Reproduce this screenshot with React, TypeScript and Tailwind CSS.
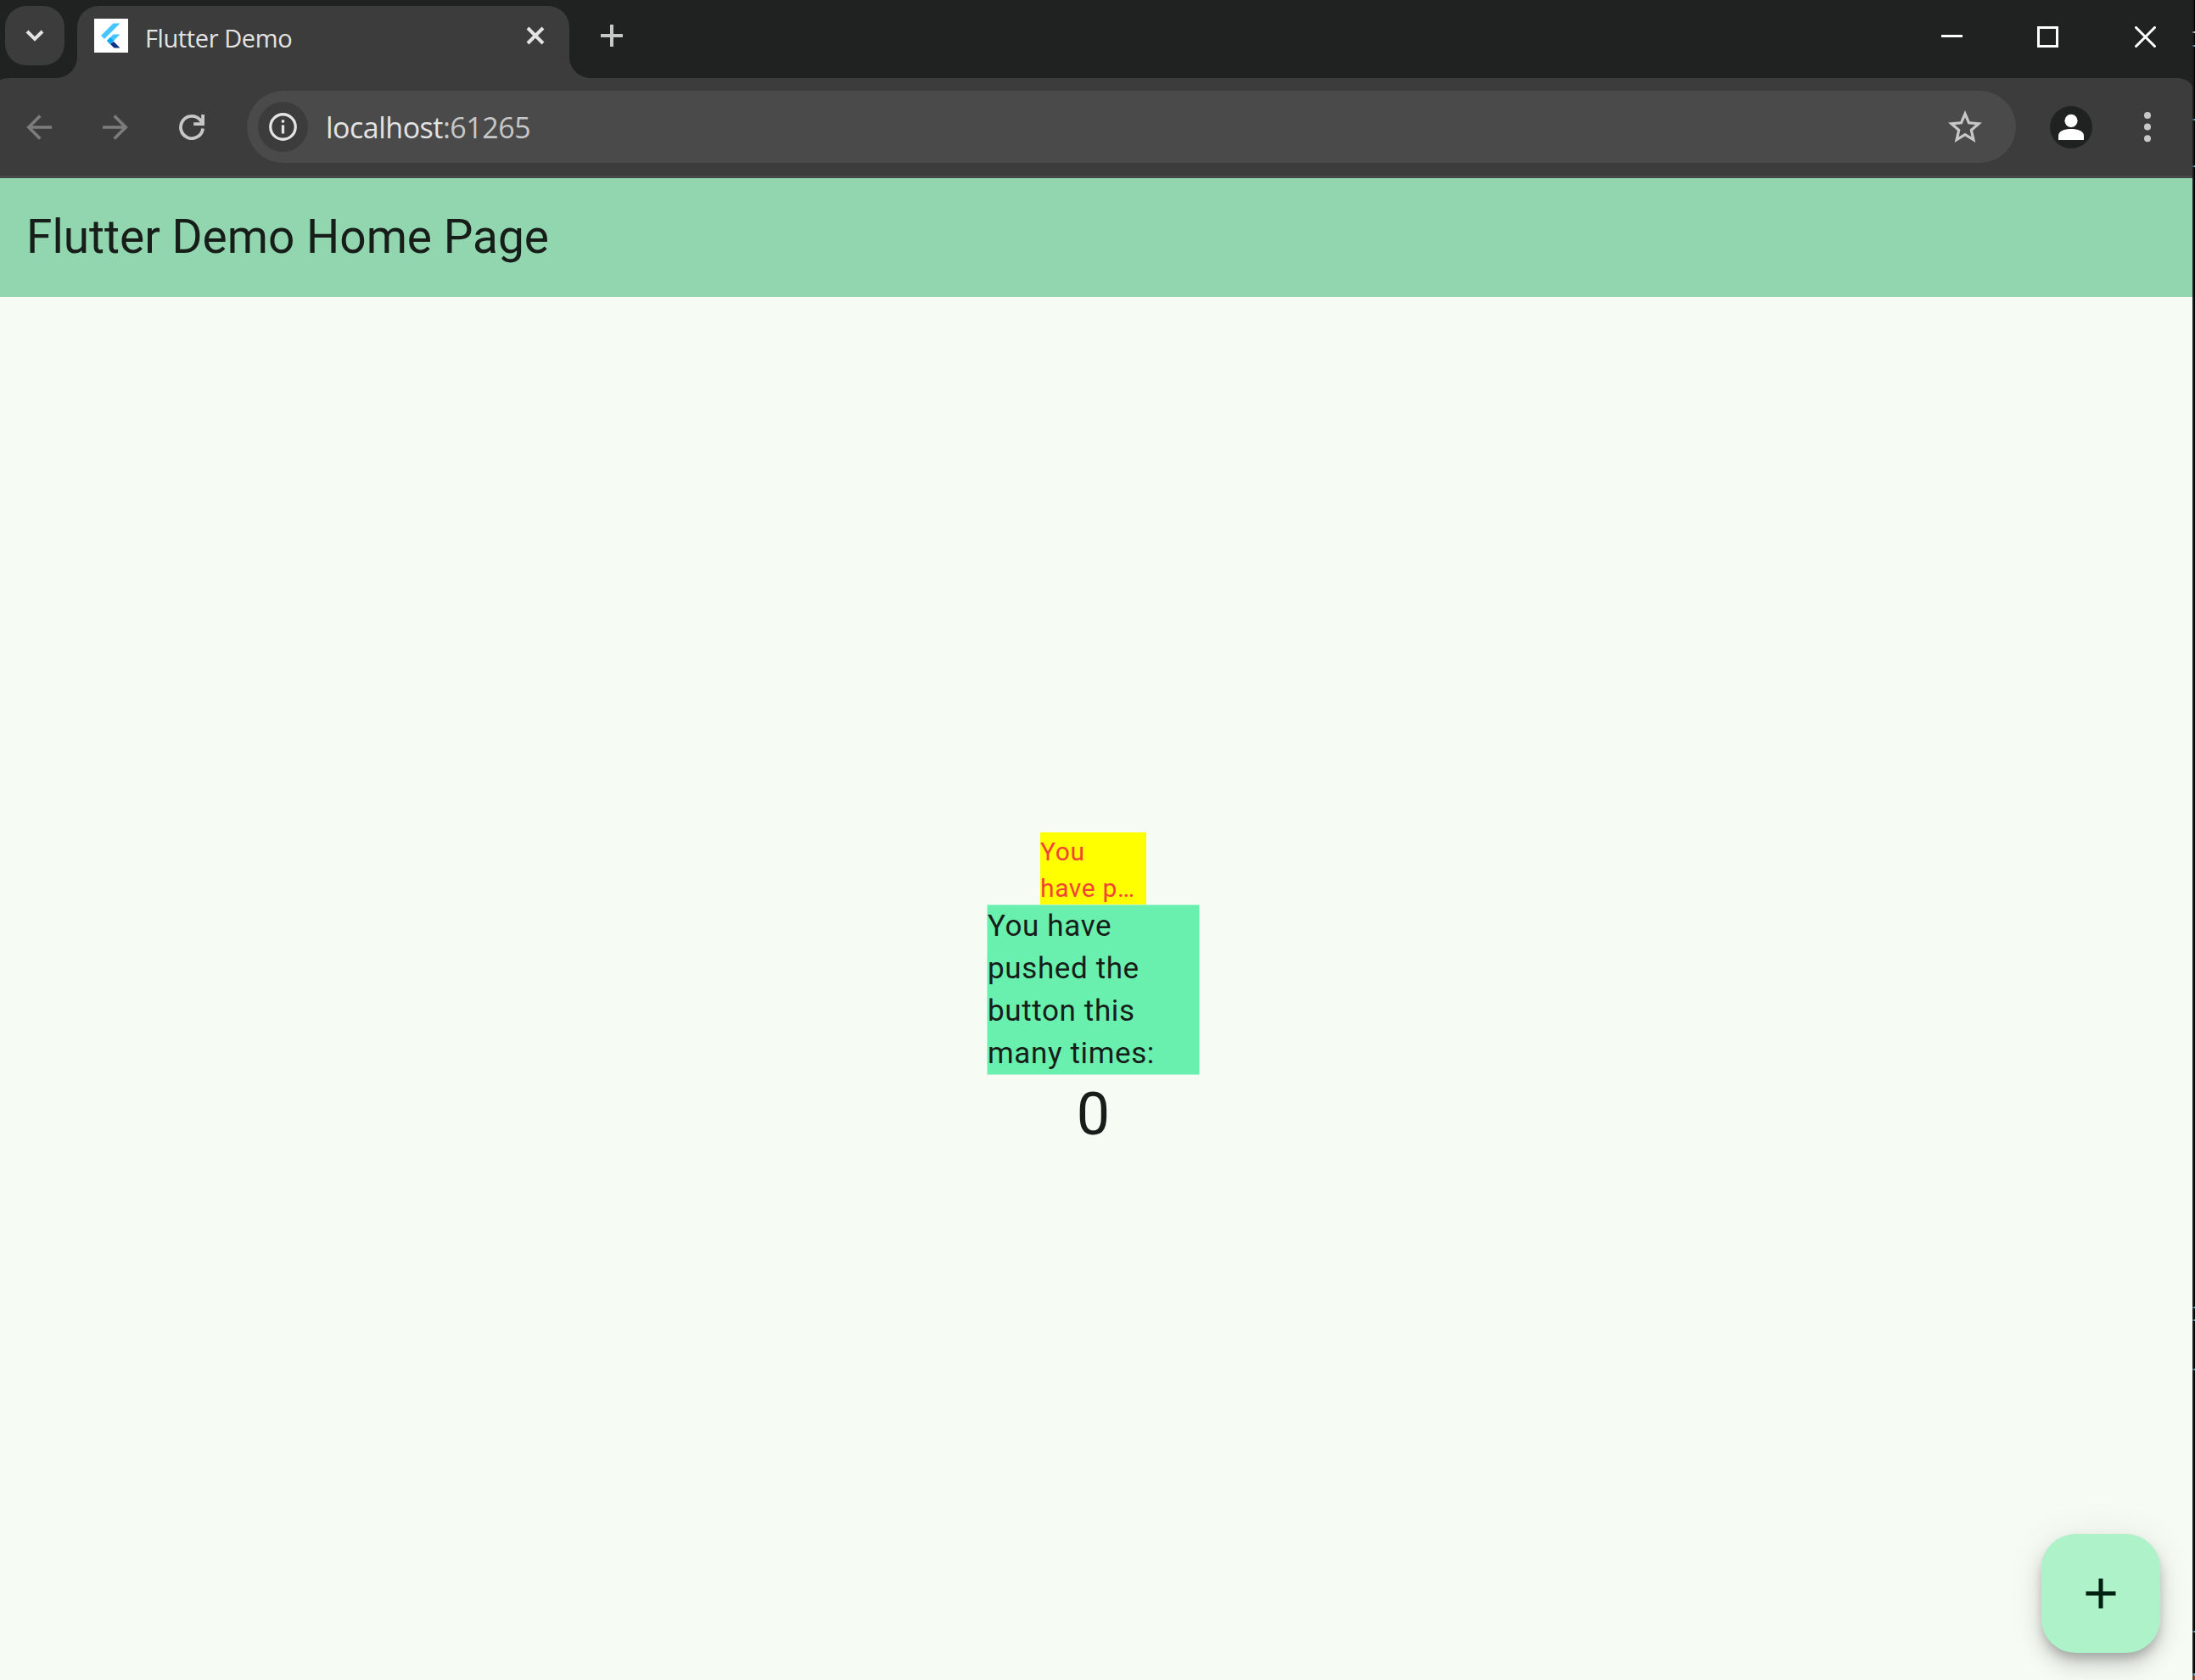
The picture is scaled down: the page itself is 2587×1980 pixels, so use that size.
const EDGE_MARKS: { top: number; height: number; color: string; dim: string }[] = [
  { top: 37, height: 2, color: '#c9c9c9', dim: '#7d7d7d' },
  { top: 53, height: 2, color: '#79a9b7', dim: '#45666f' },
  { top: 140, height: 2, color: '#6fa3bd', dim: '#3f6070' },
  { top: 195, height: 2, color: '#6fa3bd', dim: '#3f6070' },
  { top: 1540, height: 2, color: '#79a9b7', dim: '#45666f' },
  { top: 1555, height: 2, color: '#79a9b7', dim: '#45666f' },
  { top: 1613, height: 2, color: '#79a9b7', dim: '#45666f' },
  { top: 1922, height: 2, color: '#79a9b7', dim: '#45666f' },
  { top: 1972, height: 3, color: '#79a9b7', dim: '#45666f' },
  { top: 1975, height: 5, color: '#8a4a38', dim: '#6d3a2c' },
];

function FlutterIcon() {
  return (
    <svg width="40" height="40" viewBox="0 0 40 40" className="ml-5 mt-[15px] shrink-0 bg-white">
      <path d="M22.5 5.5H30.5L12 24L8 20Z" fill="#47c5fb" />
      <path d="M22.5 18.5H30.5L24.5 24.5L19 30L15 26Z" fill="#47c5fb" />
      <path d="M15 26L19 22L23 26L19 30Z" fill="#00a8f5" />
      <path d="M19 30L23 27L30.5 34.5H23.5Z" fill="#0b2f8a" />
    </svg>
  );
}

function TabStrip() {
  return (
    <div className="flex h-[92px] bg-[#202221]">
      <button className="ml-1.5 mt-[7px] flex size-[70px] shrink-0 items-center justify-center rounded-[25px] bg-[#3c3c3c]">
        <svg width="24" height="16" viewBox="0 0 24 16" fill="none" stroke="#e3e3e3" strokeWidth="4">
          <path d="M3 3L12 12L21 3" />
        </svg>
      </button>
      <svg width="25" height="25" viewBox="0 0 25 25" className="ml-[-10px] mt-[67px] shrink-0">
        <path d="M25 0V25H0A25 25 0 0 0 25 0Z" fill="#3c3c3c" />
      </svg>
      <div className="mt-[7px] flex h-[85px] w-[580px] shrink-0 rounded-t-[25px] bg-[#3c3c3c]">
        <FlutterIcon />
        <span className="ml-5 mt-[15px] whitespace-nowrap font-['Open_Sans','Noto_Sans',sans-serif] text-[29px] leading-[46px] tracking-[-0.4px] text-[#e3e3e3]">
          Flutter Demo
        </span>
        <svg width="22" height="22" viewBox="0 0 22 22" className="ml-auto mr-[29px] mt-6" fill="none" stroke="#e3e3e3" strokeWidth="4">
          <path d="M2 2L20 20M20 2L2 20" />
        </svg>
      </div>
      <svg width="25" height="25" viewBox="0 0 25 25" className="mt-[67px] shrink-0">
        <path d="M0 0V25H25A25 25 0 0 1 0 0Z" fill="#3c3c3c" />
      </svg>
      <svg width="26" height="26" viewBox="0 0 26 26" className="ml-3 mt-[29px] shrink-0" stroke="#c7c7c7" strokeWidth="4">
        <path d="M13 0V26M0 13H26" />
      </svg>
      <svg width="25" height="3" viewBox="0 0 25 3" className="ml-auto mt-[41px]">
        <path d="M0 0H25V3H0Z" fill="#fff" />
      </svg>
      <svg width="25" height="25" viewBox="0 0 25 25" className="ml-[88px] mt-[31px]" fill="none" stroke="#fff" strokeWidth="3">
        <path d="M1.5 1.5H23.5V23.5H1.5Z" />
      </svg>
      <svg width="25" height="25" viewBox="0 0 25 25" className="ml-[90px] mr-[43px] mt-[31px]" fill="none" stroke="#fff" strokeWidth="3">
        <path d="M0.5 0.5L24.5 24.5M24.5 0.5L0.5 24.5" />
      </svg>
    </div>
  );
}

function Toolbar() {
  return (
    <div className="bg-[#202221]">
      <div className="flex h-[118px] items-center border-b-[3px] border-[#474747] bg-[#3c3c3c] [border-top-left-radius:13px_3px] [border-top-right-radius:19px_12px]">
        <svg width="30" height="30" viewBox="0 0 30 30" className="ml-[31px] mt-px shrink-0" fill="none" stroke="#7c7c7c" strokeWidth="3.6">
          <path d="M30 15H3M16.3 1.5L2.8 15L16.3 28.5" />
        </svg>
        <svg width="30" height="30" viewBox="0 0 30 30" className="ml-[60px] mt-px shrink-0" fill="none" stroke="#7c7c7c" strokeWidth="3.6">
          <path d="M0 15H27M13.7 1.5L27.2 15L13.7 28.5" />
        </svg>
        <svg width="30" height="30" viewBox="0 0 30 30" className="ml-[60px] shrink-0" fill="none" stroke="#c7c7c7" strokeWidth="3.8">
          <path d="M28.1 16.5A13.1 13.1 0 1 1 25.3 6.8L27 9" />
          <path d="M28.1 0V11.1H17.2" />
        </svg>
        <div className="ml-[50px] flex h-[85px] w-[2085px] shrink-0 items-center rounded-full bg-[#4a4a4a]">
          <div className="ml-[13px] flex size-[59px] shrink-0 items-center justify-center rounded-full bg-[#3c3c3c]">
            <svg width="33" height="33" viewBox="0 0 34 34" fill="none" stroke="#e3e3e3" strokeWidth="3.4">
              <circle cx="17" cy="17" r="15.2" />
              <path d="M17 14.8V25.2" />
              <circle cx="17" cy="10.2" r="1.9" fill="#e3e3e3" stroke="none" />
            </svg>
          </div>
          <span className="ml-[21px] whitespace-nowrap font-['Open_Sans','Noto_Sans',sans-serif] text-[34px] leading-none tracking-[-0.5px] text-[#e3e3e3]">
            localhost<span className="text-[#c7c7c7]">:61265</span>
          </span>
          <svg width="40" height="38" viewBox="2 2 20 19" className="mb-0.5 ml-auto mr-10 shrink-0" fill="#c7c7c7">
            <path d="m22 9.24-7.19-.62L12 2 9.19 8.63 2 9.24l5.46 4.73L5.82 21 12 17.27 18.18 21l-1.63-7.03L22 9.24zM12 15.4l-3.76 2.27 1-4.28-3.32-2.88 4.38-.38L12 6.1l1.71 4.04 4.38.38-3.32 2.88 1 4.28L12 15.4z" />
          </svg>
        </div>
        <svg width="50" height="50" viewBox="0 0 50 50" className="ml-10 mt-px shrink-0">
          <circle cx="25" cy="25" r="25" fill="#202221" />
          <circle cx="25" cy="17.3" r="7.6" fill="#fff" />
          <path d="M10 40V35C10 29.5 17 27 25 27S40 29.5 40 35V40Z" fill="#fff" />
        </svg>
        <svg width="8" height="36" viewBox="0 0 8 36" className="ml-[61px] mt-px shrink-0" fill="#c7c7c7">
          <circle cx="4" cy="4" r="4" />
          <circle cx="4" cy="17.6" r="4" />
          <circle cx="4" cy="31.3" r="4" />
        </svg>
      </div>
    </div>
  );
}

export default function App() {
  return (
    <div className="flex h-[1980px] w-[2587px] overflow-hidden bg-black">
      <div className="flex w-[2584px] shrink-0 flex-col">
        <TabStrip />
        <Toolbar />
        <header className="flex h-[140px] shrink-0 items-center bg-[#92d6af] pb-0.5 pl-[31px] font-[Roboto,sans-serif] text-[55px] leading-none text-[#171d19]">
          Flutter Demo Home Page
        </header>
        <main className="relative flex flex-1 flex-col items-center bg-[#f6fbf4] pr-[7px] pt-[631px] font-[Roboto,sans-serif] text-[#171d19]">
          <p className="h-[85px] w-[125px] overflow-hidden bg-[#ffff00] pt-px text-[30px] leading-[43px] tracking-[0.625px] text-[#f44336]">
            You<br />have p…
          </p>
          <p className="h-[201px] w-[251px] border border-[#b0f5d1] bg-[#69f0ae] text-[35px] leading-[50px] tracking-[0.625px]">
            You have pushed the button this many times:
          </p>
          <p className="text-[70px] leading-[92px]">0</p>
          <button className="absolute bottom-8 right-[38px] flex size-[140px] items-center justify-center rounded-[40px] bg-[#adf2c9] shadow-[0_8px_12px_-2px_rgba(0,0,0,0.2),0_15px_25px_rgba(0,0,0,0.14),0_2px_45px_rgba(0,0,0,0.08)]">
            <svg width="36" height="36" viewBox="0 0 36 36" stroke="#002112" strokeWidth="5">
              <path d="M18 0.5V35.5M0.5 18H35.5" />
            </svg>
          </button>
        </main>
      </div>
      <div className="relative w-[3px] border-l-2 border-[#1a1a1a] bg-black">
        {EDGE_MARKS.map((mark) => (
          <div
            key={mark.top}
            className="absolute -left-0.5 w-[3px] border-l-2"
            style={{ top: mark.top, height: mark.height, backgroundColor: mark.color, borderColor: mark.dim }}
          />
        ))}
      </div>
    </div>
  );
}
